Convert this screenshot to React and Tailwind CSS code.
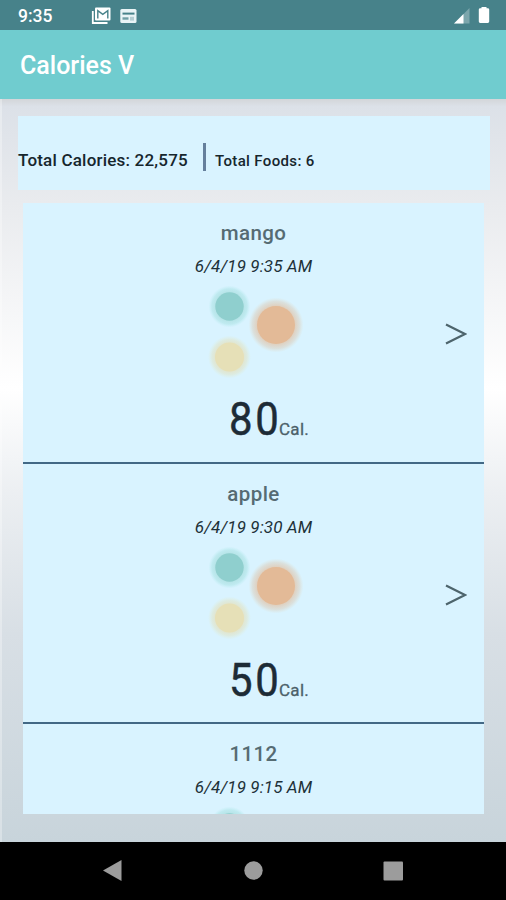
const foods = [
  { name: 'mango', date: '6/4/19 9:35 AM', calories: 80 },
  { name: 'apple', date: '6/4/19 9:30 AM', calories: 50 },
  { name: '1112', date: '6/4/19 9:15 AM' },
];

function StatusBar() {
  return (
    <div className="flex h-[30px] shrink-0 items-center bg-[#47828a] pl-[18px] pr-4 text-white">
      <span className="w-[73px] pt-px text-[17.500px] leading-[30px] font-medium">9:35</span>
      <svg width="20" height="18" viewBox="0 0 20 18" className="mt-px">
        <path d="M1.8 4v12h14.7" fill="none" stroke="#fff" strokeWidth="1.8" />
        <rect x="4" y="0.5" width="15.5" height="13" rx="1" fill="#fff" />
        <path d="M6.8 11.5V3.6l5 3.8 5-3.8v7.9" fill="none" stroke="#47828a" strokeWidth="1.4" />
      </svg>
      <svg width="17" height="16" viewBox="0 0 17 16" className="ml-[9px] mt-px">
        <rect x="0.3" y="1" width="16.2" height="14" rx="1.5" fill="#e9f4f6" />
        <path d="M2.5 5.6h12" stroke="#47828a" strokeWidth="2" />
        <path d="M2.5 10.500h6" stroke="#6f9ea5" strokeWidth="2.400" />
        <rect x="10" y="8.8" width="4" height="3.8" fill="#b4cdd2" />
      </svg>
      <svg width="16" height="16" viewBox="0 0 16 16" className="ml-auto mt-px">
        <path d="M0 15.500L15.500 0v15.500z" fill="#7ca6ac" />
        <path d="M0 15.500L9.500 6v9.500z" fill="#fff" />
      </svg>
      <svg width="12" height="18" viewBox="0 0 12 18" className="ml-2">
        <path d="M3.5 2.2V1h5v1.2h1.3q1.4 0 1.4 1.4v12q0 1.4-1.4 1.4H2.2Q.8 17 .8 15.600V3.600q0-1.400 1.400-1.400z" fill="#fff" />
      </svg>
    </div>
  );
}

function Bubbles() {
  return (
    <svg width="104" height="104" viewBox="0 0 104 104" className="block">
      <defs>
        <radialGradient id="tealGlow">
          <stop offset="0.64" stopColor="#a4dcdb" stopOpacity="0.7" />
          <stop offset="0.84" stopColor="#aee4e6" stopOpacity="0.6" />
          <stop offset="1" stopColor="#b8ecf0" stopOpacity="0" />
        </radialGradient>
        <radialGradient id="orangeGlow">
          <stop offset="0.68" stopColor="#e0cbb6" stopOpacity="0.9" />
          <stop offset="0.86" stopColor="#dbdcd5" stopOpacity="0.8" />
          <stop offset="1" stopColor="#dfe4dc" stopOpacity="0" />
        </radialGradient>
        <radialGradient id="yellowGlow">
          <stop offset="0.64" stopColor="#e3e2c4" stopOpacity="0.85" />
          <stop offset="0.82" stopColor="#dfe8d4" stopOpacity="0.7" />
          <stop offset="1" stopColor="#dfeedd" stopOpacity="0" />
        </radialGradient>
      </defs>
      <circle cx="27.500" cy="28.500" r="21" fill="url(#tealGlow)" />
      <circle cx="27.500" cy="28.500" r="14.200" fill="#8fcfce" />
      <circle cx="74" cy="47" r="27.500" fill="url(#orangeGlow)" />
      <circle cx="74" cy="47" r="19" fill="#e3ba97" />
      <circle cx="27.500" cy="79" r="21.500" fill="url(#yellowGlow)" />
      <circle cx="27.500" cy="79" r="14.500" fill="#e6e0b7" />
    </svg>
  );
}

function FoodRow({ food }) {
  return (
    <div className="grid h-[260.5px] shrink-0 grid-cols-[60px_1fr_60px] border-b-[2.5px] border-[#426885]">
      <div />
      <div className="flex flex-col items-center">
        <h2 className="mt-[17px] text-[20.500px] leading-[26px] font-medium tracking-[0.4px] text-[#566b73]">{food.name}</h2>
        <p className="mt-[8px] text-[17px] leading-[24px] tracking-[0.1px] text-[#203038] italic">{food.date}</p>
        <div>
          <Bubbles />
        </div>
        {food.calories !== undefined && (
          <div className="flex w-full items-baseline pt-[3px] pl-[146px] leading-[64px]">
            <span className="w-[50px] origin-left scale-x-[0.9] text-[46.500px] leading-[68px] tracking-[3px] text-[#1d2b36] [-webkit-text-stroke:0.5px_#1d2b36]">
              {food.calories}
            </span>
            <span className="text-[17px] tracking-[0.3px] text-[#4c6069] [-webkit-text-stroke:0.3px_#4c6069]">Cal.</span>
          </div>
        )}
      </div>
      <svg width="22" height="22" viewBox="0 0 22 22" className="mt-[120px] ml-[21px]">
        <path d="M1 1.500L20 11L1 20.500" fill="none" stroke="#4d646c" strokeWidth="2.200" />
      </svg>
    </div>
  );
}

export default function App() {
  return (
    <div className="flex h-[900px] w-[506px] flex-col overflow-hidden bg-black font-[Roboto,sans-serif]">
      <StatusBar />
      <header className="flex h-[69px] shrink-0 items-center bg-[#70cccf] pt-[3px] pl-5">
        <h1 className="text-[25px] leading-[32px] font-medium text-white">Calories V</h1>
      </header>
      <main className="flex h-[743px] shrink-0 flex-col border-l-2 border-white/30 bg-[linear-gradient(180deg,#d3d6d9_0%,#dce1e8_1%,#e9ebee_14%,#ffffff_39%,#eceff2_53%,#d8dfe5_72%,#c8d4db_100%)] pt-[17px]">
        <section className="ml-[16px] flex h-[74px] w-[472px] shrink-0 bg-[#d9f3ff] font-medium text-[#16262d]">
          <span className="mt-[32px] w-[185px] text-[17px] leading-[24px] tracking-[0.2px] whitespace-nowrap">Total Calories: 22,575</span>
          <span className="mt-[27px] h-[28px] w-[3px] bg-[#657f9c]" />
          <span className="mt-[33px] ml-[9px] text-[15px] leading-[24px] tracking-[0.35px] whitespace-nowrap">Total Foods: 6</span>
        </section>
        <section className="mt-[13px] ml-[21px] flex h-[611px] w-[461px] shrink-0 flex-col overflow-hidden bg-[#d9f3ff]">
          {foods.map((food) => (
            <FoodRow key={food.name} food={food} />
          ))}
        </section>
      </main>
      <nav className="h-[58px] shrink-0 bg-black">
        <svg width="506" height="58" viewBox="0 0 506 58" fill="#9c9c9c">
          <path d="M103 28.500L121.500 18v21z" />
          <circle cx="253.500" cy="28.500" r="9.200" />
          <rect x="383.500" y="19.500" width="19.500" height="19" rx="1" />
        </svg>
      </nav>
    </div>
  );
}
